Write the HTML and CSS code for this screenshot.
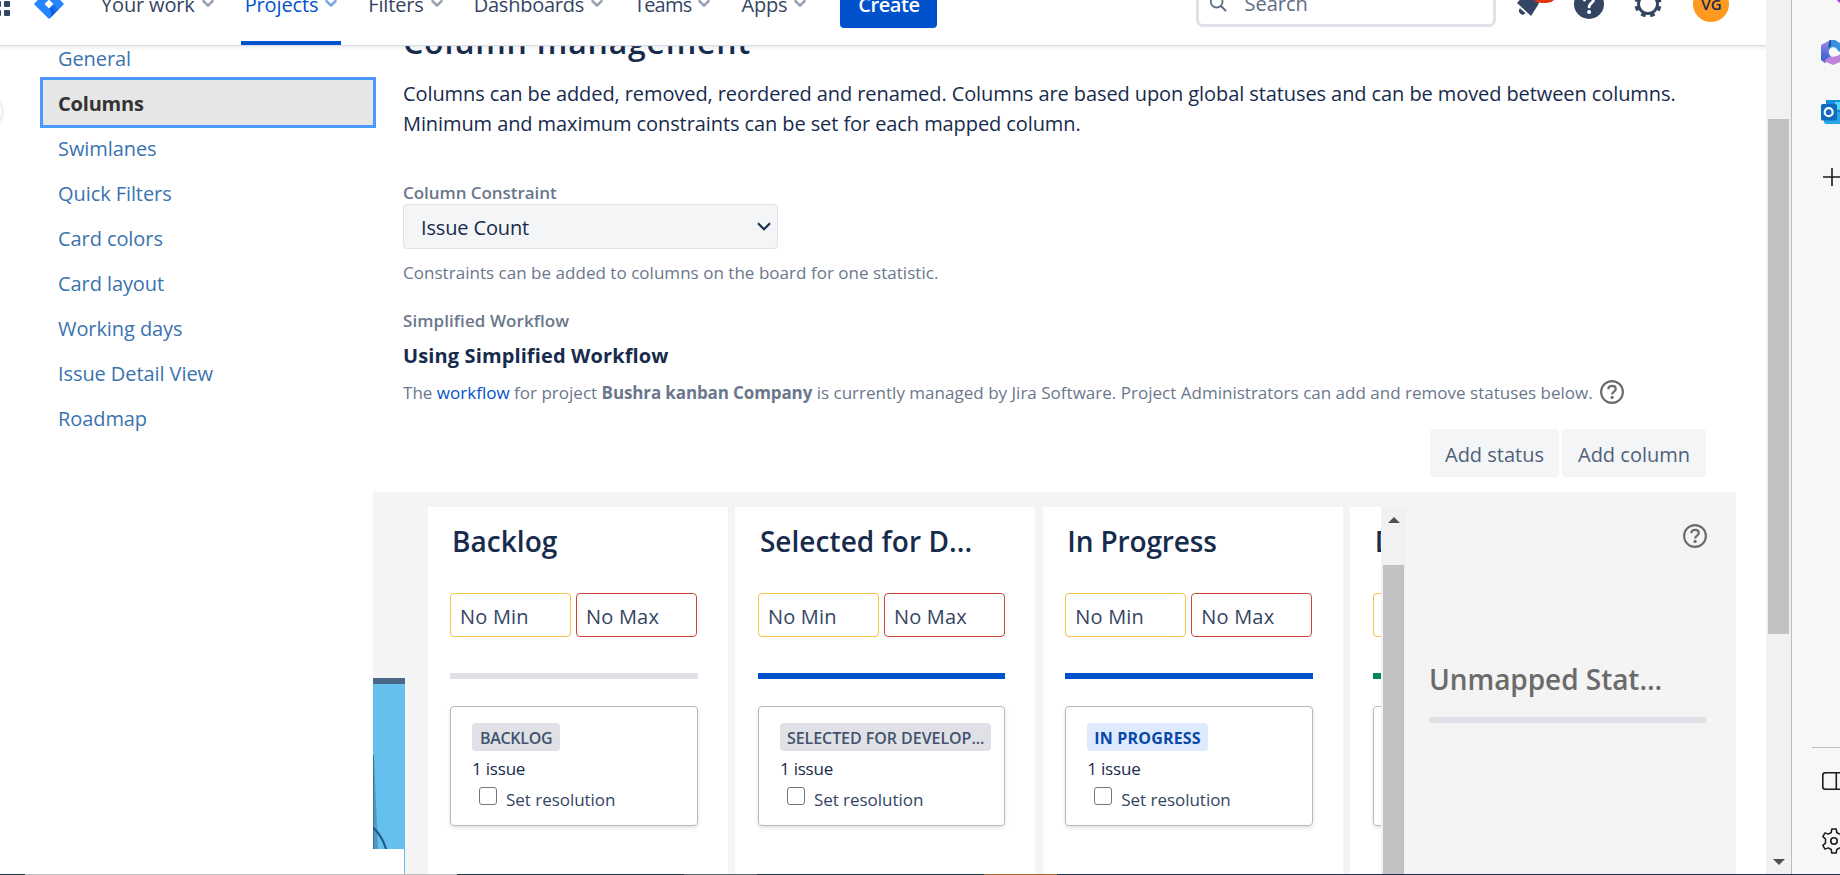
FILE: index.html
```
<!DOCTYPE html>
<html lang="en">
<head>
<meta charset="utf-8">
<title>Column management - Jira</title>
<link rel="stylesheet" href="styles.css">
</head>
<body>
<svg class="defs" width="0" height="0">
  <symbol id="chev" viewBox="0 0 12 8"><path d="M1.500 1.200 6 5.700l4.500-4.500" fill="none" stroke="currentColor" stroke-width="2.600" stroke-linecap="round" stroke-linejoin="round"/></symbol>
  <symbol id="help" viewBox="0 0 24 24"><circle cx="12" cy="12" r="10.900" fill="none" stroke="currentColor" stroke-width="2.100"/><path d="M8.300 9.200C8.300 7 9.900 5.800 12 5.800s3.800 1.200 3.800 3.200c0 2.500-3.700 2.600-3.700 5.400" fill="none" stroke="currentColor" stroke-width="2.200"/><circle cx="12.100" cy="17.400" r="1.600" fill="currentColor"/></symbol>
</svg>
<div class="window">
  <div class="app">
    <header class="topbar">
      <div class="bar">
        <svg class="switcher" viewBox="0 0 24 24" width="24" height="24"><g fill="#344563"><rect x="0" y="0" width="6" height="6" rx="1"/><rect x="9" y="0" width="6" height="6" rx="1"/><rect x="18" y="0" width="6" height="6" rx="1"/><rect x="0" y="9" width="6" height="6" rx="1"/><rect x="9" y="9" width="6" height="6" rx="1"/><rect x="18" y="9" width="6" height="6" rx="1"/><rect x="0" y="18" width="6" height="6" rx="1"/><rect x="9" y="18" width="6" height="6" rx="1"/><rect x="18" y="18" width="6" height="6" rx="1"/></g></svg>
        <svg class="logo" viewBox="0 0 30 30" width="30" height="30"><defs><linearGradient id="lg" x1="0" y1="1" x2="1" y2="0"><stop offset="0.200" stop-color="#0052cc"/><stop offset="1" stop-color="#2684ff"/></linearGradient></defs><path d="M15 0 29.200 14a1.400 1.400 0 0 1 0 2L15 30 .8 16a1.400 1.400 0 0 1 0-2z" fill="#2684ff"/><path d="M15 19.400c3 2.800 3 7.500 0 10.600l9.600-9.500L19.500 15z" fill="url(#lg)"/><path d="M15 10.600 19.500 15 15 19.400 10.500 15z" fill="#fff"/></svg>
        <nav class="menu">
          <a class="item">Your work<svg><use href="#chev"/></svg></a>
          <a class="item current">Projects<svg><use href="#chev"/></svg></a>
          <a class="item">Filters<svg><use href="#chev"/></svg></a>
          <a class="item dash">Dashboards<svg><use href="#chev"/></svg></a>
          <a class="item teams">Teams<svg><use href="#chev"/></svg></a>
          <a class="item">Apps<svg><use href="#chev"/></svg></a>
        </nav>
        <button class="create">Create</button>
        <div class="search"><svg viewBox="0 0 20 20" width="20" height="20"><circle cx="8.500" cy="8.500" r="6.500" fill="none" stroke="#5e6c84" stroke-width="2"/><path d="m13.300 13.300 5 5" stroke="#5e6c84" stroke-width="2.200" stroke-linecap="round"/></svg>Search</div>
        <div class="bell"><svg viewBox="0 0 30 30" width="30" height="30"><path d="M1 14 9 5q9-6 14 2 1 5-1 9l-7 11z" fill="#344563"/><path d="M4 19.300l5.500 5a3.600 3.600 0 0 1-5.500-5z" fill="#344563"/></svg><span class="count"></span></div>
        <svg class="round" viewBox="0 0 30 30" width="30" height="30"><circle cx="15" cy="15" r="15" fill="#344563"/><path d="M10.500 11c0-3 2-4.500 4.500-4.500s4.500 1.700 4.500 4.200c0 3.300-4.400 3.500-4.400 7" fill="none" stroke="#fff" stroke-width="3" stroke-linecap="round"/><circle cx="15.100" cy="23" r="2" fill="#fff"/></svg>
        <svg class="gear" viewBox="0 0 28 28" width="28" height="28"><circle cx="14" cy="14" r="9.500" fill="none" stroke="#344563" stroke-width="3"/><circle cx="14" cy="14" r="11.800" fill="none" stroke="#344563" stroke-width="3.600" stroke-dasharray="4.600 4.667" stroke-dashoffset="-2.300"/></svg>
        <div class="avatar">VG</div>
      </div>
    </header>
    <div class="page">
      <span class="expander"></span>
      <aside class="side">
        <a>General</a><a class="on">Columns</a><a>Swimlanes</a><a>Quick Filters</a><a>Card colors</a><a>Card layout</a><a>Working days</a><a>Issue Detail View</a><a>Roadmap</a>
      </aside>
      <main class="content">
        <section class="intro">
          <h1>Column management</h1>
          <p class="lead">Columns can be added, removed, reordered and renamed. Columns are based upon global statuses and can be moved between columns.<br>Minimum and maximum constraints can be set for each mapped column.</p>
          <div class="label">Column Constraint</div>
          <div class="select">Issue Count<svg viewBox="0 0 14 9" width="14" height="9"><path d="M1 1.300 7 7.200l6-5.900" fill="none" stroke="#172b4d" stroke-width="2.200"/></svg></div>
          <div class="hint">Constraints can be added to columns on the board for one statistic.</div>
          <div class="label second">Simplified Workflow</div>
          <h2>Using Simplified Workflow</h2>
          <div class="managed"><span>The <a>workflow</a> for project <b>Bushra kanban Company</b> is currently managed by Jira Software. Project Administrators can add and remove statuses below.</span><svg width="24" height="24"><use href="#help"/></svg></div>
          <div class="actions"><button>Add status</button><button>Add column</button></div>
        </section>
        <section class="board">
          <div class="gutter">
            <div class="art"><svg viewBox="0 0 32 165" width="32" height="165"><path d="M0 71h1l4 94H0z" fill="#5299bd"/><path d="M0 71h.8L1 165H0z" fill="#397294"/><path d="M-2 142Q9 150 14 168" fill="none" stroke="#1f568d" stroke-width="2.200"/></svg></div>
            <div class="blank"></div>
          </div>
          <div class="columns">
            <div class="col"><h3>Backlog</h3><div class="limits"><span class="min">No Min</span><span class="max">No Max</span></div><div class="rule"></div><div class="card"><span class="badge">BACKLOG</span><div class="count-line">1 issue</div><label><i></i>Set resolution</label></div></div>
            <div class="col progress"><h3>Selected for D...</h3><div class="limits"><span class="min">No Min</span><span class="max">No Max</span></div><div class="rule"></div><div class="card"><span class="badge long">SELECTED FOR DEVELOP...</span><div class="count-line">1 issue</div><label><i></i>Set resolution</label></div></div>
            <div class="col progress"><h3 class="tight">In Progress</h3><div class="limits"><span class="min">No Min</span><span class="max">No Max</span></div><div class="rule"></div><div class="card"><span class="badge blue">IN PROGRESS</span><div class="count-line">1 issue</div><label><i></i>Set resolution</label></div></div>
            <div class="col done"><h3>Done</h3><div class="limits"><span class="min">No Min</span><span class="max">No Max</span></div><div class="rule"></div><div class="card"></div></div>
          </div>
          <div class="inner-scroll"><span class="up"></span><span class="thumb"></span></div>
          <div class="unmapped"><svg width="24" height="24"><use href="#help"/></svg><h3>Unmapped Stat...</h3><div class="rule"></div></div>
        </section>
      </main>
    </div>
  </div>
  <div class="page-scroll"><span class="thumb"></span><span class="down"></span></div>
  <div class="edge">
    <svg class="spark" viewBox="0 0 4 3" width="4" height="3"><path d="M0 0h4v3Q1 2.500 0 0z" fill="#a43cf0"/></svg>
    <svg class="m365" viewBox="0 0 25 26" width="25" height="26"><defs><linearGradient id="ma" x1="0" y1="0" x2="0" y2="1"><stop offset="0" stop-color="#b58ae6"/><stop offset="0.500" stop-color="#5d6fd8"/><stop offset="1" stop-color="#2f66c9"/></linearGradient></defs><path d="M9 1 0 6v15l4 3 6-6-1-11z" fill="url(#ma)"/><path d="M9 1h5l10 6v8l-7-3-5-4-4 3-1-7z" fill="#3b8fe0"/><path d="M9 1 7 9l3-2V1z" fill="#214c9c"/><path d="m3 22 5-4 8-1 8-4v8l-12 5z" fill="#bd83dc"/><circle cx="12.300" cy="13" r="4.700" fill="#f7f7f7"/></svg>
    <svg class="outlook" viewBox="0 0 28 24" width="28" height="24"><path d="M5 0h23v12H5z" fill="#1490df"/><path d="M14 2h14v9H14z" fill="#50d9ff"/><path d="M3 10h25v14H5q-2 0-2-2z" fill="#28a8ea"/><path d="m14 10 14 8V9z" fill="#1784c9"/><rect y="4" width="16" height="16.500" rx="1.500" fill="#0f6cbd"/><circle cx="7.700" cy="12.200" r="4" fill="none" stroke="#fff" stroke-width="2.200"/></svg>
    <svg class="plus" viewBox="0 0 18 18" width="18" height="18"><path d="M0 9h18M9 0v18" stroke="#1b1b1b" stroke-width="1.600"/></svg>
    <div class="sep"></div>
    <svg class="split" viewBox="0 0 26 18" width="26" height="18"><rect x=".8" y=".8" width="24" height="16.400" rx="2.500" fill="none" stroke="#1b1b1b" stroke-width="1.600"/><path d="M14.300 0v18" stroke="#1b1b1b" stroke-width="1.600"/></svg>
    <svg class="cog" viewBox="0 0 26 26" width="26" height="26"><path d="M10.200 4.500 10.800 1h4.400l.6 3.500 2.900 1.600 3.300-1.200 2.200 3.800-2.700 2.200v4.200l2.700 2.200-2.200 3.800-3.300-1.200-2.900 1.600-.6 3.500h-4.400l-.6-3.500-2.900-1.600L4 21.100l-2.200-3.800 2.700-2.200v-4.200L1.800 8.700 4 4.900l3.300 1.200z" fill="none" stroke="#1b1b1b" stroke-width="1.500" stroke-linejoin="round"/><circle cx="13" cy="13" r="3.200" fill="none" stroke="#1b1b1b" stroke-width="1.600"/></svg>
  </div>
</div>
<div class="taskline"></div>
</body>
</html>
```
FILE: styles.css
```
* { box-sizing: border-box; }
body { margin: 0; height: 875px; overflow: hidden; background: #fff; color: #172b4d; font: 400 20px/30px "Open Sans", "Noto Sans", sans-serif; }
h1, h2, h3, p { margin: 0; }
svg { display: block; flex: none; }
button { border: 0; font: inherit; padding: 0; }
.defs { position: absolute; }
.window { display: flex; height: 874px; }
.app { width: 1766px; display: flex; flex-direction: column; overflow: hidden; flex: none; }
.taskline { height: 1px; background: linear-gradient(90deg, #1b3640 25px, #bdbdbd 25px 457px, #1b3640 457px 684px, #56646c 684px 757px, #1b3640 757px 984px, #a8642c 984px 1057px, #1c2f4b 1057px); }

/* top navigation, scrolled partly out of the window */
.topbar { height: 45px; flex: none; display: flex; align-items: flex-end; background: #fff; box-shadow: 0 1px 1px #d9dce2, 0 3px 4px #091e4214; position: relative; z-index: 2; }
.bar { height: 83px; width: 100%; flex: none; display: flex; align-items: center; }
.switcher { margin-left: -14px; }
.logo { margin-left: 24px; }
.menu { display: flex; height: 83px; gap: 23px; margin-left: 33px; }
.item { display: flex; align-items: center; gap: 7px; padding: 3px 4px 0; color: #344563; font-weight: 500; letter-spacing: -.15px; border-bottom: 4px solid transparent; border-top: 4px solid transparent; }
.item svg { width: 12px; height: 8px; color: #97a0af; margin-top: -3px; }
.current { color: #0052cc; border-bottom-color: #0052cc; }
.current svg { color: #79a4e6; }
.dash { letter-spacing: -.25px; }
.teams { letter-spacing: -.8px; }
.create { width: 97px; height: 48px; margin-left: 30px; border-radius: 4px; background: #0052cc; color: #fff; font-weight: 600; letter-spacing: -.45px; padding-top: 3px; }
.search { width: 300px; height: 47px; margin-left: 259px; border: 3px solid #dfe1e6; border-radius: 7px; display: flex; align-items: center; gap: 17px; padding-left: 10px; color: #5e6c84; }
.search svg { width: 18px; margin-top: -1px; }
.bell { width: 30px; height: 30px; margin-left: 20px; position: relative; }
.count { position: absolute; left: 14px; top: -9px; width: 28px; height: 23px; border-radius: 12px; background: #de350b; }
.round { margin-left: 28px; }
.gear { margin-left: 30px; }
.avatar { width: 36px; height: 36px; margin-left: 31px; border-radius: 50%; background: #ff991f; font-size: 15px; font-weight: 600; line-height: 36px; text-align: center; }

/* settings navigation */
.page { display: flex; flex: 1; min-height: 0; position: relative; }
.expander { position: absolute; left: -28px; top: 51px; width: 30px; height: 30px; border-radius: 50%; background: #fff; box-shadow: 0 0 0 1px #091e4214, 0 2px 4px 1px #091e4214; }
.side { width: 373px; flex: none; display: flex; flex-direction: column; padding-left: 43px; margin-top: -10px; color: #3b73af; letter-spacing: -.08px; }
.side a { height: 45px; line-height: 48px; padding-left: 15px; flex: none; }
.side .on { background: #e6e6e6; outline: 3px solid #4c9aff; color: #333; font-weight: 700; letter-spacing: -.2px; }

/* column settings */
.content { flex: 1; min-width: 0; overflow: hidden; padding-right: 30px; display: flex; flex-direction: column; }
.intro { padding: 0 30px; flex: none; }
h1 { margin-top: -23px; font-size: 32px; line-height: 40px; font-weight: 600; letter-spacing: .8px; }
.lead { margin-top: 17px; letter-spacing: -.088px; white-space: nowrap; }
.label { margin-top: 43px; font-size: 17px; line-height: 22px; font-weight: 600; color: #6b778c; letter-spacing: -.05px; }
.select { width: 375px; height: 45px; border: 1px solid #dfe1e6; border-radius: 4px; background: #f4f5f7; padding: 2px 6px 0 17px; display: flex; align-items: center; justify-content: space-between; letter-spacing: -.15px; }
.select svg { margin-top: -3px; }
.hint { margin-top: 13px; font-size: 17px; line-height: 22px; color: #6b778c; letter-spacing: .03px; }
.second { margin-top: 26px; letter-spacing: .08px; }
h2 { margin-top: 10px; font-size: 20px; line-height: 28px; font-weight: 700; letter-spacing: .12px; }
.managed { margin-top: 10px; display: flex; align-items: center; gap: 7px; height: 26px; line-height: 26px; font-size: 17px; color: #6b778c; white-space: nowrap; letter-spacing: .015px; }
.managed a { color: #0052cc; }
.managed b { letter-spacing: -.12px; }
.managed svg { color: #6b6b6b; margin-top: -3px; }
.actions { margin-top: 23px; display: flex; justify-content: flex-end; gap: 3px; }
.actions button { height: 48px; width: 129px; border-radius: 4px; background: #f4f5f7; color: #505f79; padding-top: 3px; }
.actions button + button { width: 144px; }

/* board preview */
.board { flex: 1; min-height: 0; margin-top: 15px; background: #f4f4f4; display: flex; padding-top: 15px; overflow: hidden; }
.gutter { width: 55px; flex: none; padding-top: 171px; }
.art { width: 32px; height: 171px; border-top: 6px solid #4a6785; background: #65c0ed; overflow: hidden; }
.blank { width: 32px; height: 30px; background: #fff; border-right: 1px solid #65c0ed; }
.columns { width: 953px; flex: none; overflow: hidden; display: flex; gap: 7.400px; }
.col { width: 300px; flex: none; background: #fff; padding: 14px 30px 0 22px; }
.col + .col { padding-left: 22.500px; }
h3 { font-size: 28px; line-height: 40px; font-weight: 550; letter-spacing: .05px; padding-left: 2px; white-space: nowrap; }
.tight { letter-spacing: -.15px; }
.limits { display: flex; gap: 5px; margin-top: 32px; }
.limits span { width: 121px; height: 44px; flex: none; border: 1px solid #f6c342; border-radius: 4px; padding: 1px 0 0 9px; line-height: 43px; color: #344563; letter-spacing: .2px; }
.limits .max { border-color: #d04437; }
.rule { height: 6px; margin-top: 36px; background: #dfe1e6; }
.progress .rule { background: #0052cc; }
.done .rule { background: #00875a; }
.card { height: 120px; margin-top: 27px; border: 1px solid #b8b8b8; border-radius: 4px; box-shadow: 0 2px 4px #0000001f; padding: 16px 0 0 21px; font-size: 17px; line-height: 24px; }
.badge { display: block; width: fit-content; height: 28px; line-height: 30px; padding: 0 8px; border-radius: 4px; background: #dfe1e6; color: #42526e; font-size: 16px; font-weight: 600; letter-spacing: -.3px; }
.long { letter-spacing: -.05px; padding: 0 7px; }
.blue { background: #deebff; color: #0747a6; font-weight: 700; letter-spacing: .18px; padding: 0 7px; }
.count-line { margin-top: 6px; letter-spacing: -.2px; }
.card label { display: flex; gap: 9px; margin: 6px 0 0 7px; line-height: 26px; color: #344563; letter-spacing: -.03px; }
.card i { width: 18px; height: 18px; border: 1.500px solid #767676; border-radius: 3px; }
.inner-scroll { width: 25px; flex: none; background: #f1f1f1; padding: 10px 2px 0; display: flex; flex-direction: column; align-items: center; gap: 42px; }
.up { border: 6px solid transparent; border-top: 0; border-bottom-color: #505050; }
.inner-scroll .thumb { width: 21px; flex: 1; background: #c1c1c1; }
.unmapped { flex: 1; padding: 17px 30px 0 23px; color: #6b6b6b; }
.unmapped svg { margin: 0 -1px 0 auto; }
.unmapped h3 { margin-top: 111px; padding: 0; font-weight: 600; letter-spacing: -.05px; }
.unmapped .rule { margin-top: 18px; }

/* window scrollbar and browser side strip */
.page-scroll { width: 25px; flex: none; background: #f1f1f1; padding-top: 119px; display: flex; flex-direction: column; align-items: center; }
.page-scroll .thumb { width: 21px; height: 515px; background: #c1c1c1; }
.down { margin-top: 225px; border: 6px solid transparent; border-bottom: 0; border-top-color: #505050; }
.edge { flex: 1; background: #f7f7f7; border-left: 1px solid #bdbdbd; overflow: hidden; padding-left: 29px; display: flex; flex-direction: column; }
.spark { margin-left: 16px; }
.m365 { margin-top: 36px; }
.outlook { margin-top: 35px; }
.plus { margin: 44px 0 0 2px; }
.sep { height: 1px; flex: none; background: #bdbdbd; margin: 561px 0 24px -9px; }
.split { margin-left: 1px; }
.cog { margin-top: 38px; }
```
